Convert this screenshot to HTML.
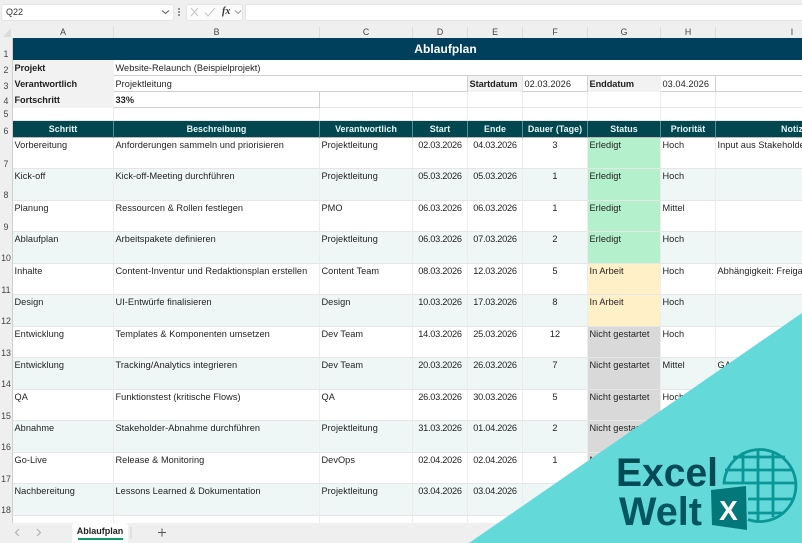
<!DOCTYPE html>
<html lang="de"><head><meta charset="utf-8"><title>Ablaufplan</title>
<style>
html,body{margin:0;padding:0;width:802px;height:543px;overflow:hidden;background:#efefef;font-family:"Liberation Sans",sans-serif;color:#1f1f1f}
.a{position:absolute}
#wrap{position:relative;width:802px;height:543px;overflow:hidden}
table{border-collapse:separate;border-spacing:0;table-layout:fixed;position:absolute;left:13px;top:38px;width:856px;font-size:9.2px;letter-spacing:.05px;background:#fff}
td{padding:0 1.500px;overflow:hidden;white-space:nowrap;vertical-align:top;border-right:1px solid #ececec;border-bottom:1px solid #e6e6e6;box-sizing:border-box;line-height:12px}
tr.d td{padding-top:1px;height:31px}
tr.d.alt td{height:32px}
tr.alt td{background:#eef6f6}
td.c{text-align:center}
td.t{text-align:center;letter-spacing:-.25px}
tr.h td{background:#02474f;color:#e6f5f5;font-weight:bold;font-size:8.900px;text-align:center;border-right:1px solid #4f8f95;border-bottom:1px solid #bbb;vertical-align:middle;height:17px}
td.g,tr.alt td.g{background:#b5f0cc}
td.y,tr.alt td.y{background:#fff0c8}
td.n,tr.alt td.n{background:#d9d9d9}
td.l{background:#f2f2f2;font-weight:bold;border-right:0;border-bottom:0;vertical-align:middle;letter-spacing:-.05px}
td.i{vertical-align:middle;border-right:1px solid #d0d0d0;border-bottom:1px solid #cfcfcf}
.ch{position:absolute;top:27px;height:11px;line-height:11px;font-size:8.800px;color:#444;text-align:center;background:#efefef;border-right:1px solid #dcdcdc;box-sizing:border-box}
.rn{position:absolute;left:0;width:12px;font-size:8.800px;color:#444;text-align:center;line-height:10px}
</style></head><body><div id="wrap">

<div class="a" style="left:0;top:0;width:802px;height:29px;background:#efefef"></div>
<div class="a" style="left:1px;top:4px;width:171px;height:15px;background:#fff;border:1px solid #e4e4e4;border-radius:3px;font-size:9px;line-height:15px;text-indent:4px;color:#333">Q22</div>
<div class="a" style="left:186px;top:4px;width:55px;height:15px;background:#fbfbfb;border:1px solid #e4e4e4;border-radius:3px"></div>
<svg class="a" style="left:0;top:0" width="250" height="24" viewBox="0 0 250 24" fill="none">
<path d="M162 10.500l3.500 3 3.500-3" stroke="#555" stroke-width="1"/>
<circle cx="179" cy="9" r=".9" fill="#555"/><circle cx="179" cy="12" r=".9" fill="#555"/><circle cx="179" cy="15" r=".9" fill="#555"/>
<path d="M191 8l7 8M198 8l-7 8" stroke="#c4c4c4" stroke-width="1"/>
<path d="M205 12.500l3 3.500 7-8" stroke="#c4c4c4" stroke-width="1"/>
<path d="M235 10.500l3 3 3-3" stroke="#999" stroke-width="1"/>
</svg>
<div class="a" style="left:222px;top:5px;font:italic bold 10px 'Liberation Serif',serif;line-height:14px;color:#333">fx</div>
<div class="a" style="left:245px;top:4px;width:557px;height:15px;background:#fff;border:1px solid #e4e4e4;border-radius:3px"></div>

<div class="a" style="left:0;top:27px;width:13px;height:11px;background:#efefef"></div>
<svg class="a" style="left:0;top:27px" width="13" height="11"><path d="M11 1v9H3z" fill="#dcdcdc"/></svg>
<div class="ch" style="left:13px;width:101px">A</div>
<div class="ch" style="left:114px;width:206px">B</div>
<div class="ch" style="left:320px;width:93px">C</div>
<div class="ch" style="left:413px;width:55px">D</div>
<div class="ch" style="left:468px;width:55px">E</div>
<div class="ch" style="left:523px;width:65px">F</div>
<div class="ch" style="left:588px;width:73px">G</div>
<div class="ch" style="left:661px;width:55px">H</div>
<div class="ch" style="left:716px;width:153px">I</div>

<div class="a" style="left:0;top:38px;width:13px;height:485px;background:#efefef;border-right:1px solid #cfcfcf;box-sizing:border-box"></div>
<div class="rn" style="top:49px">1</div><div class="rn" style="top:65px">2</div><div class="rn" style="top:81px">3</div><div class="rn" style="top:96px">4</div><div class="rn" style="top:109px">5</div><div class="rn" style="top:126px">6</div><div class="rn" style="top:159px">7</div><div class="rn" style="top:190px">8</div><div class="rn" style="top:222px">9</div><div class="rn" style="top:253px">10</div><div class="rn" style="top:285px">11</div><div class="rn" style="top:316px">12</div><div class="rn" style="top:348px">13</div><div class="rn" style="top:379px">14</div><div class="rn" style="top:411px">15</div><div class="rn" style="top:442px">16</div><div class="rn" style="top:474px">17</div><div class="rn" style="top:505px">18</div>

<table>
<colgroup><col style="width:101px"><col style="width:206px"><col style="width:93px"><col style="width:55px"><col style="width:55px"><col style="width:65px"><col style="width:73px"><col style="width:55px"><col style="width:153px"></colgroup>
<tr><td colspan="9" style="height:22px;background:#00405c;color:#fff;font-weight:bold;font-size:12px;text-align:center;vertical-align:middle;border:0;padding:0"><span style="position:relative;left:4.500px">Ablaufplan</span></td></tr>
<tr><td class="l" style="height:16px">Projekt</td><td class="i" colspan="8">Website-Relaunch (Beispielprojekt)</td></tr>
<tr><td class="l" style="height:16px">Verantwortlich</td><td class="i" colspan="3">Projektleitung</td><td class="l" style="border-right:1px solid #e0e0e0">Startdatum</td><td class="i">02.03.2026</td><td class="l">Enddatum</td><td class="i">03.04.2026</td><td class="i"></td></tr>
<tr><td class="l" style="height:16px">Fortschritt</td><td class="i" style="font-weight:bold">33%</td><td></td><td></td><td></td><td></td><td></td><td></td><td></td></tr>
<tr><td style="height:13px"></td><td></td><td></td><td></td><td></td><td></td><td></td><td></td><td></td></tr>
<tr class="h"><td>Schritt</td><td>Beschreibung</td><td>Verantwortlich</td><td>Start</td><td>Ende</td><td>Dauer (Tage)</td><td>Status</td><td>Priorität</td><td>Notiz</td></tr>
<tr class="d"><td>Vorbereitung</td><td>Anforderungen sammeln und priorisieren</td><td>Projektleitung</td><td class="t">02.03.2026</td><td class="t">04.03.2026</td><td class="c">3</td><td class="g">Erledigt</td><td>Hoch</td><td>Input aus Stakeholder-Workshop</td></tr>
<tr class="d alt"><td>Kick-off</td><td>Kick-off-Meeting durchführen</td><td>Projektleitung</td><td class="t">05.03.2026</td><td class="t">05.03.2026</td><td class="c">1</td><td class="g">Erledigt</td><td>Hoch</td><td></td></tr>
<tr class="d"><td>Planung</td><td>Ressourcen &amp; Rollen festlegen</td><td>PMO</td><td class="t">06.03.2026</td><td class="t">06.03.2026</td><td class="c">1</td><td class="g">Erledigt</td><td>Mittel</td><td></td></tr>
<tr class="d alt"><td>Ablaufplan</td><td>Arbeitspakete definieren</td><td>Projektleitung</td><td class="t">06.03.2026</td><td class="t">07.03.2026</td><td class="c">2</td><td class="g">Erledigt</td><td>Hoch</td><td></td></tr>
<tr class="d"><td>Inhalte</td><td>Content-Inventur und Redaktionsplan erstellen</td><td>Content Team</td><td class="t">08.03.2026</td><td class="t">12.03.2026</td><td class="c">5</td><td class="y">In Arbeit</td><td>Hoch</td><td>Abhängigkeit: Freigabe Inhalte</td></tr>
<tr class="d alt"><td>Design</td><td>UI-Entwürfe finalisieren</td><td>Design</td><td class="t">10.03.2026</td><td class="t">17.03.2026</td><td class="c">8</td><td class="y">In Arbeit</td><td>Hoch</td><td></td></tr>
<tr class="d"><td>Entwicklung</td><td>Templates &amp; Komponenten umsetzen</td><td>Dev Team</td><td class="t">14.03.2026</td><td class="t">25.03.2026</td><td class="c">12</td><td class="n">Nicht gestartet</td><td>Hoch</td><td></td></tr>
<tr class="d alt"><td>Entwicklung</td><td>Tracking/Analytics integrieren</td><td>Dev Team</td><td class="t">20.03.2026</td><td class="t">26.03.2026</td><td class="c">7</td><td class="n">Nicht gestartet</td><td>Mittel</td><td>GA4</td></tr>
<tr class="d"><td>QA</td><td>Funktionstest (kritische Flows)</td><td>QA</td><td class="t">26.03.2026</td><td class="t">30.03.2026</td><td class="c">5</td><td class="n">Nicht gestartet</td><td>Hoch</td><td></td></tr>
<tr class="d alt"><td>Abnahme</td><td>Stakeholder-Abnahme durchführen</td><td>Projektleitung</td><td class="t">31.03.2026</td><td class="t">01.04.2026</td><td class="c">2</td><td class="n">Nicht gestartet</td><td>Hoch</td><td></td></tr>
<tr class="d"><td>Go-Live</td><td>Release &amp; Monitoring</td><td>DevOps</td><td class="t">02.04.2026</td><td class="t">02.04.2026</td><td class="c">1</td><td class="n">Nicht gestartet</td><td>Hoch</td><td></td></tr>
<tr class="d alt"><td>Nachbereitung</td><td>Lessons Learned &amp; Dokumentation</td><td>Projektleitung</td><td class="t">03.04.2026</td><td class="t">03.04.2026</td><td class="c">1</td><td class="n">Nicht gestartet</td><td>Hoch</td><td></td></tr>
<tr class="d"><td></td><td></td><td></td><td></td><td></td><td></td><td></td><td></td><td></td></tr>
</table>

<div class="a" style="left:0;top:523px;width:802px;height:20px;background:#efefef"></div>
<svg class="a" style="left:0;top:523px" width="180" height="20" fill="none">
<path d="M19 6l-3.500 3.500 3.500 3.500" stroke="#aaa"/><path d="M37 6l3.500 3.500-3.500 3.500" stroke="#aaa"/>
<path d="M131 4v12" stroke="#d0d0d0"/><path d="M162 5.500v8M158 9.500h8" stroke="#555"/>
</svg>
<div class="a" style="left:72px;top:523px;width:56px;height:20px;background:#fff;border-radius:3px 3px 0 0"></div>
<div class="a" style="left:72px;top:526px;width:56px;text-align:center;font-size:9px;font-weight:bold;line-height:11px;color:#222">Ablaufplan</div>
<div class="a" style="left:78px;top:538px;width:45px;height:2px;background:#0f9a6c"></div>

<svg class="a" style="left:0;top:0" width="802" height="543" viewBox="0 0 802 543">
<polygon points="802,313 802,543 469,543" fill="#64d9d9"/>
<g fill="none" stroke="#0a9696" stroke-width="2.800">
<path d="M748 519.500A36 36 0 1 0 724 483H795"/>
<path d="M733 457H785M725 470H793M748 499H792M748 513H782"/>
<path d="M743 452V483M758 449V520M773 451V517"/>
</g>
<path d="M711 490L746 486L747 530L712 525Z" fill="#04777a"/>
<text x="728.500" y="520" font-family="Liberation Sans,sans-serif" font-weight="bold" font-size="28" fill="#fff" text-anchor="middle">X</text>
<text x="616" y="486" font-family="Liberation Sans,sans-serif" font-weight="bold" font-size="40" fill="#024a55" textLength="102" lengthAdjust="spacingAndGlyphs">Excel</text>
<text x="619" y="525" font-family="Liberation Sans,sans-serif" font-weight="bold" font-size="40" fill="#035660" textLength="83" lengthAdjust="spacingAndGlyphs">Welt</text>
</svg>
</div></body></html>
